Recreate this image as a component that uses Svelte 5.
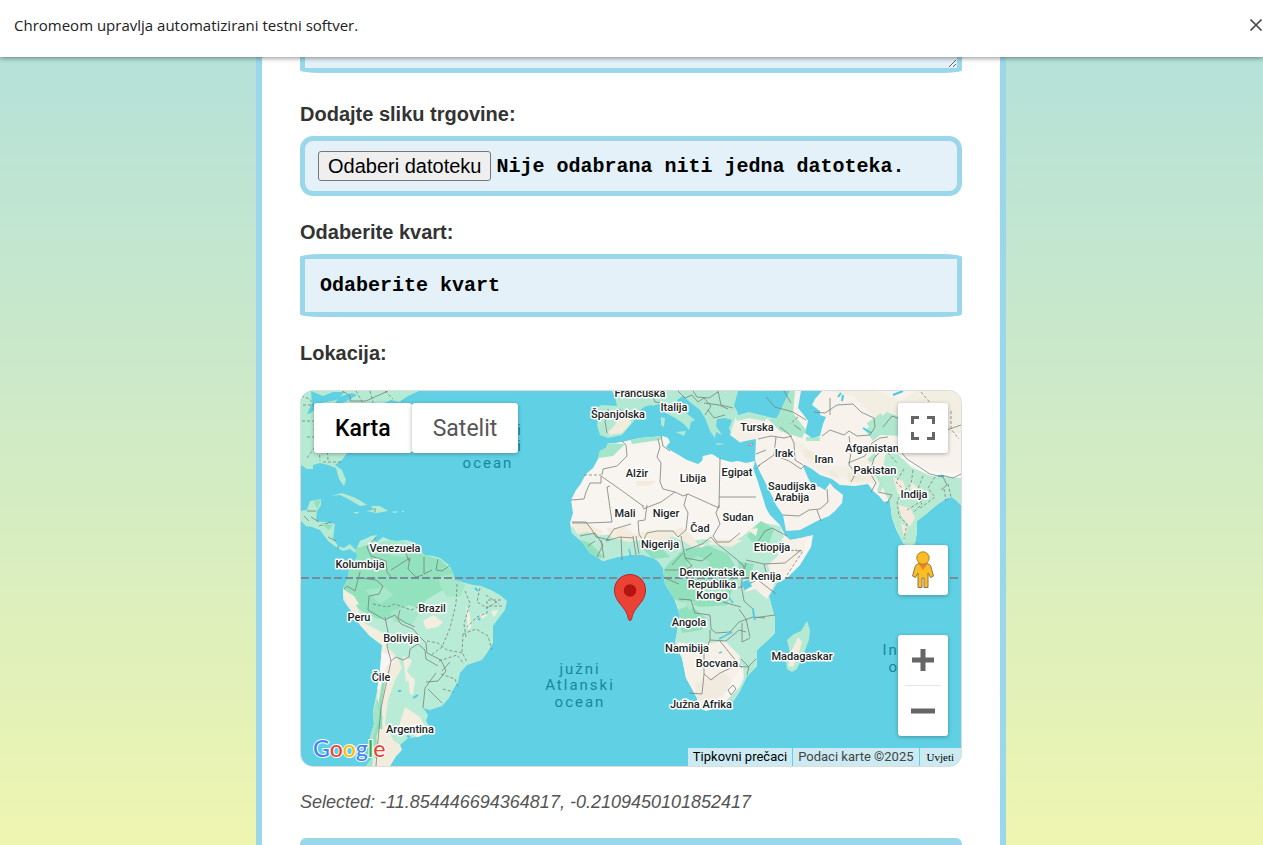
<script>
  const places = [
    [640, 397, 'Francuska'], [674, 411, 'Italija'], [618, 418, 'Španjolska'],
    [757, 431, 'Turska'], [784, 457, 'Irak'], [824, 463, 'Iran'],
    [872, 452, 'Afganistan'], [875, 474, 'Pakistan'], [914, 498, 'Indija'],
    [792, 490, 'Saudijska'], [792, 501, 'Arabija'], [637, 477, 'Alžir'],
    [693, 482, 'Libija'], [737, 476, 'Egipat'], [625, 517, 'Mali'],
    [666, 517, 'Niger'], [738, 521, 'Sudan'], [700, 532, 'Čad'],
    [660, 548, 'Nigerija'], [772, 551, 'Etiopija'], [712, 576, 'Demokratska'],
    [712, 588, 'Republika'], [712, 599, 'Kongo'], [766, 580, 'Kenija'],
    [689, 626, 'Angola'], [687, 652, 'Namibija'], [717, 667, 'Bocvana'],
    [701, 708, 'Južna Afrika'], [802, 660, 'Madagaskar'], [395, 552, 'Venezuela'],
    [360, 568, 'Kolumbija'], [432, 612, 'Brazil'], [359, 621, 'Peru'],
    [401, 642, 'Bolivija'], [381, 681, 'Čile'], [410, 733, 'Argentina']
  ];
  const seas = [
    [520, 435, 'i'], [520, 451, 'i'], [488, 468, 'ocean'],
    [580, 674, 'južni'], [580, 690, 'Atlanski'], [580, 707, 'ocean'],
    [914, 655, 'Indijski'], [914, 672, 'ocean']
  ];
  let mapType = $state('Karta');
</script>

<div class="page">
  <header class="infobar">
    <span>Chromeom upravlja automatizirani testni softver.</span>
    <button class="close" type="button" aria-label="Zatvori">
      <svg width="14" height="14" viewBox="0 0 14 14"><path d="M1.500 1.500l11 11M12.500 1.500l-11 11" fill="none" stroke="#444649" stroke-width="1.7" /></svg>
    </button>
  </header>

  <main>
  <form class="card">
    <textarea class="field description" aria-label="Opis"></textarea>

    <label for="image">Dodajte sliku trgovine:</label>
    <div class="file">
      <span class="pick">Odaberi datoteku</span>
      <span>Nije odabrana niti jedna datoteka.</span>
      <input id="image" type="file" />
    </div>

    <label for="district">Odaberite kvart:</label>
    <select id="district" class="field district"><option>Odaberite kvart</option></select>

    <h2>Lokacija:</h2>
    <div class="map">
      <svg class="world" viewBox="301 391 660 375" preserveAspectRatio="xMidYMid slice">
        <defs>
          <path id="africa-shape" d="M608 443L615 443 626 441 640 438 663 436 668 438 670 442 666 447 670 450 677 454 687 460 698 464 702 461 703 456 712 454 720 459 731 462 738 461 746 463 755 461 753 469 757 479 763 498 766 508 770 515 780 525 785 535 790 540 801 538 813 535 811 547 800 565 787 578 777 583 769 596 772 608 775 618 775 633 770 638 757 650 757 666 747 676 740 691 734 700 727 706 716 708 706 711 698 707 697 698 691 687 686 678 682 658 675 643 678 627 680 615 674 598 665 584 663 568 658 561 653 558 643 555 630 555 617 557 603 561 590 553 583 543 572 533 570 523 573 513 571 500 576 490 580 485 586 474 593 468 598 459 600 451 606 448Z" />
          <path id="america-shape" d="M356 550L360 541 367 538 371 536 377 535 373 541 377 542 383 537 390 540 397 541 406 540 413 542 416 548 425 555 433 556 440 558 449 565 453 573 455 580 473 585 481 586 491 590 500 595 507 601 505 610 498 619 493 626 493 643 487 653 482 660 467 665 460 673 458 682 454 688 449 698 442 706 430 710 423 708 428 715 426 721 430 727 428 733 418 737 408 738 400 745 402 750 396 756 390 766 366 766 372 758 370 748 370 738 374 724 373 711 377 691 380 671 381 658 382 645 370 636 360 625 352 612 343 600 343 588 348 578 349 569 354 563 357 556Z" />
          <path id="asia-shape" d="M756 439L758 438 766 419 777 418 790 391 961 391 961 505 957 501 952 497 947 498 938 504 933 508 926 514 917 521 917 532 915 543 910 548 903 543 896 529 892 518 890 501 884 502 879 496 873 491 868 484 855 486 840 485 836 482 832 479 820 475 812 469 805 465 803 466 808 478 812 485 820 487 825 490 830 483 834 488 843 495 842 503 835 511 829 516 817 521 800 530 786 531 783 515 776 505 773 498 767 486 758 468 755 460Z" />
          <clipPath id="africa"><use href="#africa-shape" /></clipPath>
          <clipPath id="america"><use href="#america-shape" /></clipPath>
          <clipPath id="asia"><use href="#asia-shape" /></clipPath>
        </defs>
        <rect x="301" y="391" width="660" height="375" fill="#60d1e5" />

        <!-- North and Central America -->
        <g fill="#b5ead3">
          <path d="M301 391H419L408 396 399 402 391 400 382 404 373 412 361 425 355 440 347 453 342 460 335 465 342 470 346 480 344 486 339 479 336 468 328 465 320 463 313 465 313 469 307 469 301 465Z" />
          <path d="M301 511L307 510 310 501 321 499 321 505 317 511 316 521 324 522 335 524 333 538 338 546 344 548 350 544 356 550 355 553 350 549 343 551 336 547 328 541 320 530 312 527 306 526 301 521Z" />
          <path d="M331 496L342 493 353 497 361 501 367 505 360 506 350 500 340 495ZM371 506L380 506 388 511 377 513 366 511 374 510ZM353 512L359 512 357 514ZM391 512L397 511 396 513ZM402 511h2v1h-2z" />
        </g>
        <path d="M311 391l12 5 10-4h12l-9 8-15 3-10 10-4 1 5-11zM338 397l14-4 5 2-12 7-10 3z" fill="#60d1e5" />
        <path d="M301 396l9 3 7 14-3 12 1 22-8 11M303 405h8M302 421h12M307 437h9M318 430l2 31M326 427l2 34M323 462h19M356 391l7 12M370 391l4 15M385 391l8 8" class="state" />
        <path d="M342 391q11 5 8 10h16l22-10M304 516l5 5M307 511h9M311 517l8 5M319 526l12-4M328 537l8 4M338 546v3M375 508v4" class="border" />
        <path d="M314 501l7-1-4 9zM320 523l13 2-4 5z" fill="#8fe0bb" />

        <!-- South America -->
        <use href="#america-shape" fill="#b9ecd7" />
        <g clip-path="url(#america)">
          <path d="M350 550l20-6 18 9 25-2 28 9 18 18-8 10-10 3-15 9-5 9-13-4-10 12-20 2-18-9-15-18-7-22z" fill="#91e2bd" />
          <path d="M378 542l24-3 11 9-7 9-15-1-10-8zM438 577l15-3 12 11-4 11-14 1-6-9zM365 590l20-3 8 8-13 9zM390 612l15-6 14 7-7 12-18-3z" fill="#a5e7c9" />
          <path d="M342 592l11 8 13 24 16 8 5 14 11 12 4 10-7 12-7 20-3 23 8 17 10 7-12 23-19-1 2-13-4-21 6-27 3-35 2-15-21-11z" fill="#f2ecdd" />
          <path d="M378 651l13 4 4 7-8 3-7 22-5 5z" fill="#f9f5f2" />
          <path d="M341 588l13 8 5 8-8 3zM359 623l18 8 6 15-8-2zM403 656l9 4-5 11 5 7-6 4zM408 675l7 4-2 16-3-1zM423 621l10-6 10 7-5 5-12 2zM466 605l4 10 1 12-3 3zM491 611l8-1-5 7zM480 614l8 1-6 4zM405 707l15 10 8 15-10 6-9-8-10-4z" fill="#f4eee1" />
          <path d="M383 718l-9 20-2 28h-10l5-25 10-43z" fill="#a2e6c7" />
          <path d="M381 717l-6 19 1 22M384 680l-4 24 1 25" stroke="#8fe0bb" stroke-width="3" fill="none" />
        </g>
        <path d="M376 537l-9 10 4 9 15 5 1 11 4 5M391 570l11-7 8-5-2 11 8 8 7-2M413 542l-8 9 4 10M424 557v17l8-4M438 559l-2 11 6 1 7-5M360 572l-5 19-8-5-3 3M362 578l14 2 7 6-4 8-10 2-1 14 17 10 10-5 6 9 12 5 7 8 6 6 1 10 14 7 5 11-8 10-12 1M385 617l3 15-1 14 4 15 5-4 7 3 6-3 1-8 8-5 7 6 1 9 12 7M400 610l-2 8 8 5 9 4M391 661l-4 19-6 28-3 32-2 26M423 708l2-20 11-15M428 689l14 14M442 671l8-9" class="border" />
        <path d="M373 604l14 3 8-3 16 6 7-3M457 584l-1 20-6 24-8 19-11 8M465 591l5 12-6 21 2 13M480 588l-3 14 10 6 11-7M487 601v12l-10 4-10 10M463 634l13-5 12 7 4 14M463 634l-1 18 5 10M427 641l11 2 9 7 16 3M439 661l18-6 7 9M441 674l14 5 3 8M443 689l11 3M486 595l13 9M488 600h15M489 606h14" class="state" />
        <path d="M478 618l2 2M398 691h3M413 698l5-3M407 736l3 1M475 588l3 3" stroke="#4acbe3" stroke-width="2" />

        <!-- Europe -->
        <path d="M612 391H741L735 404 738 415 750 416 766 419 758 439 748 439 740 443 732 436 729 428 732 420 725 418 717 419 716 426 722 435 716 432 715 438 710 431 705 418 700 410 690 402 683 396 677 400 680 408 695 420 691 422 689 430 684 424 675 418 666 413 660 404 646 406 634 414 634 421 628 428 622 435 608 438 600 435 597 425 600 411 597 408 601 405 617 406 615 397Z" fill="#b3e9d3" />
        <path d="M614 426l9-12 6-3 2 12-9 10-12 2-2-3z" fill="#f1ecde" />
        <path d="M608 409l1 8-4 4 2 12M618 409l13 5M652 394l3 8 9 1M678 391l7 7 7-3 6 7 6-4 7 8-6 9M693 391l4 6 12 1 9-6M704 403l15 2 9 4M708 410l6 8 11-3M718 391l3 14 12 3" class="border" />
        <path d="M661 417l4 1-1 9-3-2zM676 432l10-1-2 5zM716 443l9 1-8 1zM669 391l7 3-5 3zM649 403l8 1-4 2z" fill="#b3e9d3" />
        <path d="M738 391h27l8 15 5 13-12-1-25-2-7-10z" fill="#60d1e5" />

        <!-- Asia -->
        <path d="M736 416l14-3 23 6 14 7-4 11-27 2-16 3-10-7z" fill="#f4f0e5" />
        <path d="M735 416l14-4 24 6-9 3-15-3-12 3z" fill="#b3e9d3" />
        <use href="#asia-shape" fill="#f7f2ec" />
        <g clip-path="url(#asia)">
          <path d="M760 391h35l-2 22 13 17-4 8-22-7-14-14z" fill="#a9e6ca" />
          <path d="M829 391l24 5 18 18 10 13 27-8 20 16 33-2v-42h-45l-15 10-24-10z" fill="#f3eee2" />
          <path d="M792 441l11 2 7 8 12 3 9 12 20 0 16-8 9-12 12 2-4 22 3 15-15-2-22 1-4-6-20-3-17-12z" fill="#f4efe5" />
          <path d="M848 473l20-8 9 8-3 7-26 2zM804 449l11 5-1 6-9-3zM828 470l9 2 3 7-8-2z" fill="#f0eadb" />
          <path d="M865 430l22-18 20 8-7 16-20-1-7 6z" fill="#b0e8ce" />
          <path d="M887 448l13 8 11 11 20 9 30-1v32l-15-6-20 16-6 28-14 6-15-35-3-17-8-17z" fill="#b8ead2" />
          <path d="M898 505l12 3 5 10-5 9-8-10zM893 477l10 4 4 12-9 1zM910 481l8 7-7 3zM901 523l7 5-4 9z" fill="#f3eadd" />
          <path d="M900 454l17 13 17 7 27 2" stroke="#f8faf7" stroke-width="4" fill="none" />
          <path d="M874 470l8 13-3 8M868 425l14-10M806 439l14 0M869 461l7-7" stroke="#b0e8ce" stroke-width="4" fill="none" />
          <path d="M801 391H822L815 399 812 405 820 411 820 415 826 417 823 424 820 436 812 438 805 433 808 421 803 414 798 408Z" fill="#60d1e5" />
          <path d="M838 397l3-4M842 401l1-6M863 428l8 5M893 395l10-4M938 476h6" stroke="#43c8e5" stroke-width="2" />
        </g>
        <path d="M780 427l10 8 4 8 1 17 8 5M758 439l13-3 13 2 8-2M776 437l-2 18-16 11M774 455l15 6 12 8 4-4M756 454l10-4M760 465l-4 4M783 515l16 1 10-6 11-1 8-7-1-13M817 510l4 11M766 397l9 10 18 5 13 8M784 391l7 12M794 425l7 5M822 436l8-6 14 5 5-4 8 5 13-1 5-8-1-9-13-6-8-8-16 1-12 8-11-1M830 415v-17M849 436l2 16-2 13 7 8-5 9M848 463l17-7 7-13 8-5 8-1M883 427l9-11 8 3 8-7M886 443l-5 8-7 7-4 15 6 10-5 9M878 492l14 3-5 8M896 446l11 13 23 15 13 3 4 8-6 5M941 475l12 3 8-4M900 438l15-6 12 5 34-12" class="border" />
        <path d="M904 469l-8 13 8 8-7 11 2 15 8 8-3 15M913 470l-2 14-11 11M923 476l-8 20 7 8-9 9M935 477l-7 11 7 9-16 12M907 510l16-10M948 484l3 13M944 489l2 12M951 411v18l8 10M756 425l10 3M798 417l-8 7M888 453l9 10M921 392l11 13 12-1" class="state" />
        <path d="M748 445l5-2-2 3z" fill="#f4f0e5" stroke="#888" stroke-width=".7" />

        <!-- Africa -->
        <use href="#africa-shape" fill="#f8f4ef" />
        <g clip-path="url(#africa)">
          <path d="M565 526l22 3 14 6 16-1 13 7 22-2 15-5 18 8 19-3 23 6 16-9 16-14 21 4 5 14-8 13 7 11-6 18-7 20 8 23-8 29-18 24-9 3-1-16-23-4-11 3-25-3-18-1-5-40-11-36-22-14-39 5-38-33z" fill="#b8ead5" />
          <path d="M574 538l16 5 14 14-11 4-16-16zM642 548l16-3 12 12-17 2zM684 549l25-3 19 8 8 14-3 20-6 17-26 2-29-8-14-22 10-13zM747 536l14-15 13 8-5 14-14 2zM675 611l15-6 16 13-4 12-20 3zM738 561l16 3-4 13-10-3z" fill="#91e1bd" />
          <path d="M686 563l12-7 12 6-5 10-13 2zM704 586l18-4 5 11-16 5zM683 600l12 2-5 9zM715 567l12 8-8 6z" fill="#a9e7ca" />
          <path d="M572 525l14-2 17 8-3 5-13-4-10 2zM606 528l19-1 11 8 12-5 24 1 10-4 7 6 12 15 14-9 28 1-12 7-24-3-15 3-17-12-18 9-14-7-13 5-18-4zM636 481l20 0-5 4-14 1z" fill="#f3ecdd" />
          <path d="M595 451l13-8 17 1-12 12-14 2zM630 439l33-3-3 4-28 4zM590 468l8-10" fill="#a5e6ca" />
          <path d="M756 578l13-4 6 9-8 16-12-10-10 3zM748 530l10-2-2 8zM782 538l26-2-6 20-18 19-12 3-4-13 13-12zM677 642l20 3 28-4 15 15-1 16-9 10-9 21-18 5-9-14-12-19z" fill="#f6f0e7" />
          <path d="M695 683l28-11 9 8-6 12-13 10-18-2z" fill="#f1ebdf" />
          <path d="M721 706l18-18 13-26 5 8-16 35z" fill="#b4e9d2" />
        </g>
        <path d="M602 475l1-6 14-3 10-10-1-11-4-4M571 500l13-1 2-7 4-9h11v-7l20 14 22 16M643 508l0-3M610 486l-3 1 5 35-24 1-16 0M572 522l14 0 6 8 4 7 14 3M643 509l18-7 14-10-12-3-3-7 1-19-4-6 3-10-2-8M661 436l2 10 7 5M675 492l8 4 5-2 31 14 1-50M719 497h37M687 494l-3 11 4 8-2 17-8 7-5-6-16 0-10 2-4 8-4-7-1-13 7-1 2-15M631 524l-17 5-8 12 14-4 13 1M621 537l1 23M633 536l3 19M636 536l3 18M601 540l3 18M580 536l15-3 8 12-6 12M588 546l7-5M719 505l-3 8 4 11-7 12 4 6 12 0 11-9M686 550l16-6 9-7 4 5 20 16 9 8-1 8M665 570h17M681 536l4 22 7 8-11 6M685 558l17 3 10-8M683 553l-11 12M665 578l14 6M757 543l8-12 7-3 15 8M746 560l18 4 21-1 16-13M764 564l4 16M746 563l-5 21 3 17 10 9M738 588l20-8 18 14M723 602l18 5M679 599l12 1 4 13 15 2 1 14 5 4 14-1 9-10 14-5 12 1M710 630v10l16 1 13-11 7 2M710 640l-4 10-29-1M704 651v23l7 6 9-7 15-7 13 1 8-8M704 674l-2 20-13-1M720 641l12 15 10 12M742 623v19l8-4M739 609l7 10 4 18M753 618l22-3M741 659l8 8-2 8" class="border" />
        <path d="M728 690l5-5 3 4-5 6z" class="border" />
        <path d="M787 575l16-24-8-1M584 475h17M786 550l14 1" class="state" />
        <path d="M742 583l6-2 3 5-6 3zM753 608l2 12-2-7zM733 603l-8-11M719 639l13-7M629 549l2 8M719 653l3-1" fill="#59cae4" stroke="#59cae4" stroke-width="1.5" />

        <!-- Madagascar -->
        <path d="M807 621L810 630 809 640 802 658 797 669 792 672 787 669 786 661 790 653 787 640 794 634 801 631Z" fill="#b4e9d2" />
        <path d="M798 637l4 5-3 11-6 14-5-1 3-14z" fill="#f4ecdf" />

        <path d="M301 578H961" stroke="#768d98" stroke-width="2" stroke-dasharray="8 3" fill="none" />
        {#each seas as [x, y, name]}<text {x} {y} class="sea">{name}</text>{/each}
        {#each places as [x, y, name]}<text {x} {y} class="place">{name}</text>{/each}

        <path d="M630 574.500C621 574.500 614.500 581.500 614.500 590 614.500 594.500 616 598 618 601 623 608 627 611 628.300 618.500 628.700 621.200 631.300 621.200 631.700 618.500 633 611 637 608 642 601 644 598 645.500 594.500 645.500 590 645.500 581.500 639 574.500 630 574.500Z" fill="#ea4335" stroke="#c5221f" />
        <circle cx="630" cy="590.500" r="6.200" fill="#b31412" />
        <text x="313" y="757" class="brand"><tspan fill="#4285f4">G</tspan><tspan fill="#ea4335">o</tspan><tspan fill="#fbbc04">o</tspan><tspan fill="#4285f4">g</tspan><tspan fill="#34a853">l</tspan><tspan fill="#ea4335">e</tspan></text>
      </svg>

      <div class="types">
        {#each ['Karta', 'Satelit'] as name}
          <button type="button" class:active={mapType === name} onclick={() => (mapType = name)}>{name}</button>
        {/each}
      </div>
      <div class="controls">
        <button type="button" class="tile" aria-label="Cijeli zaslon">
          <svg width="24" height="24" viewBox="0 0 24 24"><path d="M1.500 8V1.500H8M16 1.500h6.500V8M22.500 16v6.500H16M8 22.500H1.500V16" fill="none" stroke="#666" stroke-width="3" /></svg>
        </button>
        <button type="button" class="tile pegman" aria-label="Street View">
          <svg width="24" height="40" viewBox="0 0 24 40">
            <path d="M8 13L4.500 15.500 1.500 26l3 1.500L7 23v14.500h4V28h2v9.500h4V23l2.500 4.500 3-1.500-3-10.500L16 13z" fill="#fbbc24" stroke="#8b7650" />
            <path d="M7.500 14h9L12 20z" fill="#e88132" />
            <circle cx="12" cy="8" r="6.200" fill="#fbbc24" stroke="#a88134" />
          </svg>
        </button>
        <div class="zoom">
          <button type="button" aria-label="Povećaj"><svg width="24" height="24" viewBox="0 0 24 24"><path d="M12 1v22M1 12h22" stroke="#666" stroke-width="5" /></svg></button>
          <button type="button" aria-label="Smanji"><svg width="24" height="24" viewBox="0 0 24 24"><path d="M0 12h24" stroke="#666" stroke-width="5" /></svg></button>
        </div>
      </div>
      <div class="legal">
        <button type="button">Tipkovni prečaci</button>
        <span>Podaci karte ©2025</span>
        <a href="#uvjeti">Uvjeti</a>
      </div>
    </div>

    <p>Selected: -11.854446694364817, -0.2109450101852417</p>
    <button class="submit" type="submit" aria-label="Spremi"></button>
  </form>
  </main>
</div>

<style>
  :global(body) { margin: 0; }
  .page {
    height: 100vh;
    overflow: hidden;
    display: flex;
    flex-direction: column;
    background: linear-gradient(#b1e0dc, #eef5b0);
    font-family: "Liberation Sans", Arial, sans-serif;
  }
  button { font: inherit; border: 0; padding: 0; cursor: pointer; }
  .infobar {
    flex: none;
    box-sizing: border-box;
    height: 57px;
    padding: 0 0 8px 14px;
    display: flex;
    align-items: center;
    justify-content: space-between;
    position: relative;
    z-index: 1;
    background: #fff;
    color: #202124;
    font: 15px/20px "Open Sans", sans-serif;
    box-shadow: 0 1px 5px rgba(0, 0, 0, .45);
  }
  .close { display: flex; background: none; }
  main {
    flex: 1;
    min-height: 0;
    display: flex;
    justify-content: center;
    padding-right: 1px;
  }
  .card {
    overflow: hidden;
    box-sizing: border-box;
    width: 100%;
    max-width: 750px;
    padding: 0 38px;
    display: flex;
    flex-direction: column;
    background: #fff;
    border: solid #9bd7ea;
    border-width: 0 6px;
  }
  .card > * { flex: none; }
  label, h2 { margin: 0 0 10px; color: #333; font-size: 20px; font-weight: bold; line-height: 24px; }
  .field, .file {
    box-sizing: border-box;
    width: 100%;
    border: 5px solid #9bd7ea;
    background: #e4f1f8;
    color: #000;
    font: bold 20px "Courier New", "Liberation Mono", monospace;
  }
  .field { border-radius: 20px / 3px; padding: 0 15px; }
  .description { height: 120px; margin: -104px 0 29px; resize: vertical; }
  .file {
    position: relative;
    display: flex;
    align-items: center;
    gap: 5px;
    height: 60px;
    margin-bottom: 24px;
    padding: 0 13px;
    border-radius: 13px;
    white-space: nowrap;
  }
  .pick {
    padding: 2px 9px;
    border: 1px solid #767676;
    border-radius: 3px;
    background: #efefef;
    font: 20px/24px "Liberation Sans", Arial, sans-serif;
  }
  .file input { position: absolute; inset: 0; opacity: 0; }
  .district { height: 63px; margin-bottom: 24px; appearance: none; }
  h2 { margin-bottom: 25px; }
  .map {
    position: relative;
    box-sizing: border-box;
    height: 377px;
    border: 1px solid #ddd;
    border-radius: 13px;
    overflow: hidden;
    font-family: Roboto, sans-serif;
  }
  .world { display: block; width: 100%; height: 100%; }
  .border, .state { fill: none; stroke: #78817c; stroke-width: .8; }
  .state { stroke-dasharray: 3 2; }
  .place {
    font-size: 11px;
    font-weight: 500;
    text-anchor: middle;
    fill: #202525;
    stroke: #fff;
    stroke-width: 3px;
    stroke-linejoin: round;
    paint-order: stroke;
  }
  .sea { font-size: 15px; letter-spacing: 2px; text-anchor: middle; fill: #18879c; }
  .brand {
    font: 500 23px Lato, sans-serif;
    stroke: #fff;
    stroke-width: 2px;
    paint-order: stroke;
  }
  .types { position: absolute; left: 13px; top: 12px; display: flex; }
  .types button, .tile, .zoom {
    background: #fff;
    border-radius: 3px;
    box-shadow: 0 1px 4px rgba(0, 0, 0, .3);
  }
  .types button { height: 50px; padding: 0 21px; font-size: 23px; color: #565656; }
  .types .active { color: #000; font-weight: 500; }
  .controls {
    position: absolute;
    top: 12px;
    right: 13px;
    width: 50px;
    display: flex;
    flex-direction: column;
  }
  .tile, .zoom button { display: grid; place-items: center; width: 50px; height: 50px; }
  .pegman { margin: 92px 0 40px; }
  .zoom button { background: none; }
  .zoom button + button { position: relative; height: 51px; }
  .zoom button + button::before {
    content: "";
    position: absolute;
    inset: 0 7px auto;
    border-top: 1px solid #e6e6e6;
  }
  .legal {
    position: absolute;
    right: 0;
    bottom: 0;
    display: flex;
    gap: 1px;
    font-size: 13px;
    line-height: 18px;
    color: #444;
  }
  .legal > * { background: #cbeaf2; padding: 0 5px; }
  .legal button { color: #000; }
  .legal a { padding: 0 7px; color: #000; font: 11px/18px "Liberation Serif", serif; text-decoration: none; }
  p { margin: 24px 0 25px; color: #555; font-size: 18px; font-style: italic; line-height: 22px; }
  .submit { width: 100%; height: 58px; border-radius: 6px; background: #9bd7ea; }
</style>
